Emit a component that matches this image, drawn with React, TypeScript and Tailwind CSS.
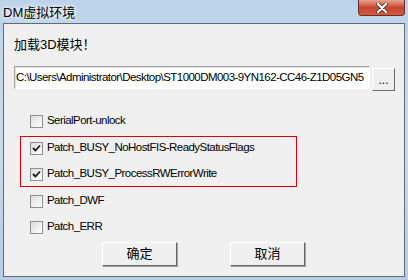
import React from "react";

const font = { fontFamily: '"Liberation Sans", "Noto Sans CJK SC", sans-serif' };

function Check({ checked }: { checked?: boolean }) {
  return (
    <div className="w-[13px] h-[13px] border border-[#8f8f8f] bg-gradient-to-br from-[#dcdcdc] to-[#ffffff] flex items-center justify-center shrink-0">
      {checked && (
        <svg width="9" height="9" viewBox="0 0 9 9">
          <path d="M1 4 L3.5 6.5 L8 1.5" stroke="#1a1a1a" strokeWidth="1.8" fill="none" />
        </svg>
      )}
    </div>
  );
}

function Row({ label, checked }: { label: string; checked?: boolean }) {
  return (
    <div className="flex items-center gap-[4px] h-[26px]">
      <Check checked={checked} />
      <span className="text-[11.5px] tracking-[-0.55px] text-black">{label}</span>
    </div>
  );
}

function Btn({ children }: { children: React.ReactNode }) {
  return (
    <div className="w-[75px] h-[24px] bg-[#f0f0f0] border border-t-white border-l-white border-r-[#696969] border-b-[#696969] shadow-[1px_1px_0_#a0a0a0] flex items-center justify-center text-[13px] text-black">
      {children}
    </div>
  );
}

export default function App() {
  return (
    <div style={font} className="w-[408px] h-[280px] bg-gradient-to-b from-[#bcd3ea] via-[#c9dcef] to-[#b5cde6] flex flex-col px-[3px] pb-[3px] overflow-hidden">
      <div className="h-[23px] flex items-start justify-between">
        <span className="text-[13px] text-black mt-[3px] [text-shadow:0_0_6px_white,0_0_4px_white]">DM虚拟环境</span>
        <div className="w-[47px] h-[16px] rounded-b-[4px] border border-[#6d2a24] border-t-0 bg-gradient-to-b from-[#e8a291] via-[#c8452f] to-[#d35a3e] flex items-center justify-center">
          <svg width="12" height="10" viewBox="0 0 12 10">
            <path d="M2 1 L10 9 M10 1 L2 9" stroke="#333" strokeWidth="3.6" strokeLinecap="round" />
            <path d="M2 1 L10 9 M10 1 L2 9" stroke="white" strokeWidth="2.2" strokeLinecap="round" />
          </svg>
        </div>
      </div>
      <div className="flex-1 bg-[#f0f0f0] border border-[#5f6b78] flex flex-col pl-[10px]">
        <div className="text-[13px] text-black mt-[11px] h-[18px]">加载3D模块！</div>
        <div className="flex items-start mt-[13px]">
          <div className="w-[356px] h-[23px] bg-white border border-[#a0a0a0] border-r-white border-b-white shadow-[inset_1px_1px_0_#e3e3e3] flex items-center overflow-hidden whitespace-nowrap text-[11.5px] tracking-[-0.55px] text-black pl-[1px]">
            C:\Users\Administrator\Desktop\ST1000DM003-9YN162-CC46-Z1D05GN5
          </div>
          <div className="ml-[2px] mt-[2px] w-[23px] h-[23px] bg-[#f0f0f0] border border-t-white border-l-white border-r-[#696969] border-b-[#696969] flex items-center justify-center text-[12px] text-black leading-none whitespace-nowrap">
            ...
          </div>
        </div>
        <div className="ml-[16px] mt-[17px] mb-[2px]">
          <Row label="SerialPort-unlock" />
        </div>
        <div className="ml-[6px] w-[277px] border border-[#e00000] pl-[9px] h-[51px] flex flex-col justify-center">
          <div className="-mt-[1px]">
            <Row label="Patch_BUSY_NoHostFIS-ReadyStatusFlags" checked />
            <Row label="Patch_BUSY_ProcessRWErrorWrite" checked />
          </div>
        </div>
        <div className="ml-[16px] mt-[1px]">
          <Row label="Patch_DWF" />
          <Row label="Patch_ERR" />
        </div>
        <div className="flex gap-[53px] ml-[88px] mt-[2px]">
          <Btn>确定</Btn>
          <Btn>取消</Btn>
        </div>
      </div>
    </div>
  );
}
